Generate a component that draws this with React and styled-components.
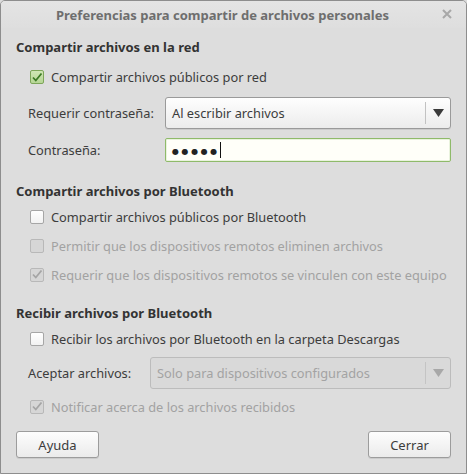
import React from "react";
import styled, { createGlobalStyle } from "styled-components";

const GlobalStyle = createGlobalStyle`
  html, body {
    margin: 0;
    padding: 0;
    background: #dcdcdc;
  }
  * {
    box-sizing: border-box;
  }
`;

// Window frame
const Window = styled.div`
  width: 467px;
  height: 474px;
  display: flex;
  flex-direction: column;
  background: #dddddd;
  border: 1px solid #8d8d8d;
  border-top-left-radius: 5px;
  border-top-right-radius: 5px;
  font-family: "Noto Sans", "DejaVu Sans", sans-serif;
  font-size: 12.8px;
  color: #3c3c3c;
  overflow: hidden;
`;

const TitleBar = styled.div`
  height: 27px;
  display: flex;
  align-items: center;
  justify-content: center;
  position: relative;
  padding-right: 22px;
  background: linear-gradient(#e4e4e4, #dedede);
`;

const Title = styled.span`
  font-weight: bold;
  font-size: 13px;
  color: #6e6e6e;
`;

const CloseButton = styled.span`
  position: absolute;
  right: 12px;
  top: 6px;
  width: 14px;
  height: 14px;
  display: flex;
  align-items: center;
  justify-content: center;
`;

const Body = styled.div`
  flex: 1;
  display: flex;
  flex-direction: column;
  padding: 8px 15px 15px 15px;
`;

const Section = styled.div`
  display: flex;
  flex-direction: column;
  margin-bottom: ${({ $gap }) => $gap || 0}px;
`;

const SectionTitle = styled.div`
  font-weight: bold;
  font-size: 13px;
  color: #333;
  height: 22px;
  line-height: 22px;
`;

const CheckRow = styled.label`
  display: flex;
  align-items: center;
  gap: 7px;
  white-space: nowrap;
  height: ${({ $h }) => $h || 29}px;
  margin-top: ${({ $mt }) => $mt || 0}px;
  padding-left: 14px;
  color: ${({ $disabled }) => ($disabled ? "#a2a2a2" : "#3c3c3c")};
`;

const Box = styled.span`
  width: 14px;
  height: 14px;
  flex-shrink: 0;
  border-radius: 2px;
  display: flex;
  align-items: center;
  justify-content: center;
  border: 1px solid ${({ $checked, $disabled }) =>
    $disabled ? "#b8b8b8" : $checked ? "#7ea65a" : "#a6a6a6"};
  background: ${({ $checked, $disabled }) =>
    $disabled ? "#d6d6d6" : $checked ? "linear-gradient(#cfe6b4, #b6d695)" : "linear-gradient(#ffffff, #f2f2f2)"};
`;

const FieldRow = styled.div`
  display: flex;
  align-items: center;
  height: ${({ $h }) => $h}px;
  padding-left: 12px;
`;

const FieldLabel = styled.span`
  width: ${({ $w }) => $w}px;
  flex-shrink: 0;
  color: #3c3c3c;
`;

const Combo = styled.div`
  flex: 1;
  height: 32px;
  display: flex;
  align-items: center;
  border: 1px solid ${({ $disabled }) => ($disabled ? "#bcbcbc" : "#9a9a9a")};
  border-radius: 3px;
  background: ${({ $disabled }) =>
    $disabled ? "#d9d9d9" : "linear-gradient(#fefefe, #ececec)"};
  color: ${({ $disabled }) => ($disabled ? "#a3a3a3" : "#3c3c3c")};
  box-shadow: ${({ $disabled }) => ($disabled ? "none" : "0 1px 0 rgba(0,0,0,0.08)")};
`;

const ComboText = styled.span`
  flex: 1;
  padding-left: 6px;
`;

const ComboArrow = styled.span`
  width: 25px;
  height: 22px;
  display: flex;
  align-items: center;
  justify-content: center;
  border-left: 1px solid ${({ $disabled }) => ($disabled ? "#c4c4c4" : "#c2c2c2")};
`;

const Entry = styled.div`
  flex: 1;
  height: 24px;
  display: flex;
  align-items: center;
  padding-left: 6px;
  border: 1px solid #8fba6a;
  border-radius: 2px;
  background: #fffff9;
  box-shadow: inset 0 0 0 1px #e9f3dd;
`;

const Dots = styled.span`
  letter-spacing: 2.6px;
  font-size: 8px;
  color: #222;
`;

const Caret = styled.span`
  width: 1px;
  height: 16px;
  background: #111;
`;

const ButtonBar = styled.div`
  margin-top: auto;
  display: flex;
  justify-content: space-between;
`;

const Button = styled.button`
  width: 83px;
  height: 27px;
  font-family: inherit;
  font-size: 13px;
  color: #3c3c3c;
  border: 1px solid #9c9c9c;
  border-radius: 3px;
  background: linear-gradient(#fdfdfd, #ebebeb);
  box-shadow: 0 1px 0 rgba(0, 0, 0, 0.08);
`;

const Check = ({ checked, disabled }) => (
  <Box $checked={checked} $disabled={disabled}>
    {checked && (
      <svg width="12" height="11" viewBox="0 0 12 11">
        <path
          d="M2 5.5 L4.8 8.5 L10.5 1.5"
          fill="none"
          stroke={disabled ? "#a5a5a5" : "#3c7a25"}
          strokeWidth="1.8"
        />
      </svg>
    )}
  </Box>
);

const Arrow = ({ disabled }) => (
  <svg width="11" height="8" viewBox="0 0 11 8">
    <path d="M0 0 L11 0 L5.5 8 Z" fill={disabled ? "#a8a8a8" : "#3a3a3a"} />
  </svg>
);

const App = () => (
  <>
    <GlobalStyle />
    <Window>
      <TitleBar>
        <Title>Preferencias para compartir de archivos personales</Title>
        <CloseButton>
          <svg width="10" height="10" viewBox="0 0 10 10">
            <path d="M1 1 L9 9 M9 1 L1 9" stroke="#a8a8a8" strokeWidth="2" />
          </svg>
        </CloseButton>
      </TitleBar>
      <Body>
        <Section $gap={13}>
          <SectionTitle>Compartir archivos en la red</SectionTitle>
          <CheckRow $h={32} $mt={3}>
            <Check checked />
            Compartir archivos públicos por red
          </CheckRow>
          <FieldRow $h={40}>
            <FieldLabel $w={137}>Requerir contraseña:</FieldLabel>
            <Combo>
              <ComboText>Al escribir archivos</ComboText>
              <ComboArrow>
                <Arrow />
              </ComboArrow>
            </Combo>
          </FieldRow>
          <FieldRow $h={34}>
            <FieldLabel $w={137}>Contraseña:</FieldLabel>
            <Entry>
              <Dots>●●●●●</Dots>
              <Caret />
            </Entry>
          </FieldRow>
        </Section>

        <Section $gap={13}>
          <SectionTitle>Compartir archivos por Bluetooth</SectionTitle>
          <CheckRow>
            <Check />
            Compartir archivos públicos por Bluetooth
          </CheckRow>
          <CheckRow $disabled>
            <Check disabled />
            Permitir que los dispositivos remotos eliminen archivos
          </CheckRow>
          <CheckRow $disabled>
            <Check checked disabled />
            Requerir que los dispositivos remotos se vinculen con este equipo
          </CheckRow>
        </Section>

        <Section>
          <SectionTitle>Recibir archivos por Bluetooth</SectionTitle>
          <CheckRow $h={30}>
            <Check />
            Recibir los archivos por Bluetooth en la carpeta Descargas
          </CheckRow>
          <FieldRow $h={38}>
            <FieldLabel $w={122}>Aceptar archivos:</FieldLabel>
            <Combo $disabled>
              <ComboText>Solo para dispositivos configurados</ComboText>
              <ComboArrow $disabled>
                <Arrow disabled />
              </ComboArrow>
            </Combo>
          </FieldRow>
          <CheckRow $disabled>
            <Check checked disabled />
            Notificar acerca de los archivos recibidos
          </CheckRow>
        </Section>

        <ButtonBar>
          <Button>Ayuda</Button>
          <Button>Cerrar</Button>
        </ButtonBar>
      </Body>
    </Window>
  </>
);

export default App;
